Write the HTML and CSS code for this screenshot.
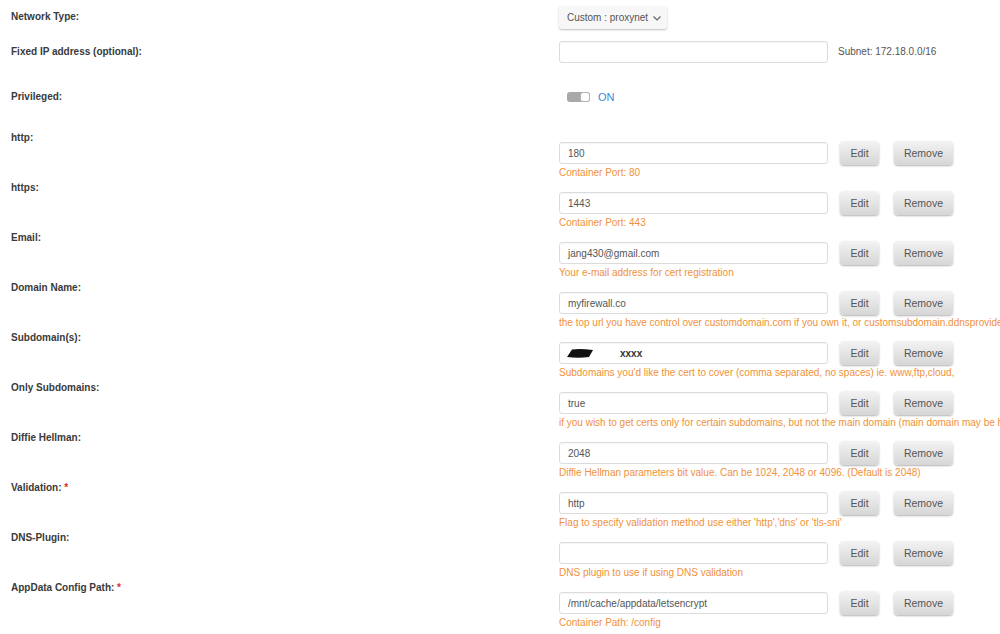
FILE: index.html
```html
<!DOCTYPE html>
<html lang="en">
<head>
  <meta charset="UTF-8">
  <title>Container Settings</title>
  <link rel="stylesheet" href="styles.css">
</head>
<body>
  <div class="form">

    <!-- Network settings -->
    <div class="row row-net">
      <div class="label">Network Type:</div>
      <div class="field">
        <div class="select">
          <span>Custom : proxynet</span>
          <svg class="chevron" width="8" height="5" viewBox="0 0 8 5"><polyline points="0.5,0.5 4,4 7.5,0.5" fill="none" stroke="#666" stroke-width="1.2"/></svg>
        </div>
      </div>
    </div>

    <div class="row row-ip">
      <div class="label">Fixed IP address (optional):</div>
      <div class="field inline">
        <div class="input"></div>
        <span class="subnet">Subnet: 172.18.0.0/16</span>
      </div>
    </div>

    <div class="row row-priv">
      <div class="label">Privileged:</div>
      <div class="field inline">
        <div class="toggle"><span class="knob"></span></div>
        <span class="on">ON</span>
      </div>
    </div>

    <!-- Ports / variables -->
    <div class="row item">
      <div class="label">http:</div>
      <div class="field">
        <div class="line">
          <div class="input">180</div>
          <button class="btn btn-edit">Edit</button>
          <button class="btn btn-remove">Remove</button>
        </div>
        <div class="desc">Container Port: 80</div>
      </div>
    </div>

    <div class="row item">
      <div class="label">https:</div>
      <div class="field">
        <div class="line">
          <div class="input">1443</div>
          <button class="btn btn-edit">Edit</button>
          <button class="btn btn-remove">Remove</button>
        </div>
        <div class="desc">Container Port: 443</div>
      </div>
    </div>

    <div class="row item">
      <div class="label">Email:</div>
      <div class="field">
        <div class="line">
          <div class="input">jang430@gmail.com</div>
          <button class="btn btn-edit">Edit</button>
          <button class="btn btn-remove">Remove</button>
        </div>
        <div class="desc">Your e-mail address for cert registration</div>
      </div>
    </div>

    <div class="row item">
      <div class="label">Domain Name:</div>
      <div class="field">
        <div class="line">
          <div class="input">myfirewall.co</div>
          <button class="btn btn-edit">Edit</button>
          <button class="btn btn-remove">Remove</button>
        </div>
        <div class="desc">the top url you have control over customdomain.com if you own it, or customsubdomain.ddnsprovider.com if dynamic dns</div>
      </div>
    </div>

    <div class="row item">
      <div class="label">Subdomain(s):</div>
      <div class="field">
        <div class="line">
          <div class="input">
            <svg class="redact" width="28" height="11" viewBox="0 0 28 11"><path d="M6 1.5 Q14 0.5 27 2 L23 9 Q12 10.5 1 9 Z" fill="#111"/></svg>
            <b class="masked">xxxx</b>
          </div>
          <button class="btn btn-edit">Edit</button>
          <button class="btn btn-remove">Remove</button>
        </div>
        <div class="desc">Subdomains you'd like the cert to cover (comma separated, no spaces) ie. www,ftp,cloud,</div>
      </div>
    </div>

    <div class="row item">
      <div class="label">Only Subdomains:</div>
      <div class="field">
        <div class="line">
          <div class="input">true</div>
          <button class="btn btn-edit">Edit</button>
          <button class="btn btn-remove">Remove</button>
        </div>
        <div class="desc">if you wish to get certs only for certain subdomains, but not the main domain (main domain may be hosted on another machine and cannot be validated)</div>
      </div>
    </div>

    <div class="row item">
      <div class="label">Diffie Hellman:</div>
      <div class="field">
        <div class="line">
          <div class="input">2048</div>
          <button class="btn btn-edit">Edit</button>
          <button class="btn btn-remove">Remove</button>
        </div>
        <div class="desc">Diffie Hellman parameters bit value. Can be 1024, 2048 or 4096. (Default is 2048)</div>
      </div>
    </div>

    <div class="row item">
      <div class="label">Validation: <span class="req">*</span></div>
      <div class="field">
        <div class="line">
          <div class="input">http</div>
          <button class="btn btn-edit">Edit</button>
          <button class="btn btn-remove">Remove</button>
        </div>
        <div class="desc">Flag to specify validation method use either 'http','dns' or 'tls-sni'</div>
      </div>
    </div>

    <div class="row item">
      <div class="label">DNS-Plugin:</div>
      <div class="field">
        <div class="line">
          <div class="input"></div>
          <button class="btn btn-edit">Edit</button>
          <button class="btn btn-remove">Remove</button>
        </div>
        <div class="desc">DNS plugin to use if using DNS validation</div>
      </div>
    </div>

    <div class="row item">
      <div class="label">AppData Config Path: <span class="req">*</span></div>
      <div class="field">
        <div class="line">
          <div class="input">/mnt/cache/appdata/letsencrypt</div>
          <button class="btn btn-edit">Edit</button>
          <button class="btn btn-remove">Remove</button>
        </div>
        <div class="desc">Container Path: /config</div>
      </div>
    </div>

  </div>
</body>
</html>
```

FILE: styles.css
```css
/* General Styles */
body {
  margin: 0;
  background: #fff;
  font-family: "Liberation Sans", Arial, sans-serif;
  font-size: 10px;
  color: #555;
  overflow: hidden;
}

.form {
  width: 1000px;
  overflow: hidden;
}

.row {
  display: flex;
}

.label {
  width: 548px;
  flex-shrink: 0;
  padding-left: 11px;
  font-weight: bold;
  color: #3a3a3a;
  line-height: 14px;
}

.req {
  color: #e22828;
}

.field {
  display: flex;
  flex-direction: column;
  min-width: 0;
  white-space: nowrap;
}

.field.inline {
  flex-direction: row;
  align-items: center;
}

/* Top rows */
.row-net {
  height: 34px;
  align-items: center;
}

.row-ip {
  height: 35px;
  align-items: center;
}

.row-priv {
  height: 56px;
  align-items: center;
  margin-bottom: 6px;
}

.select {
  display: flex;
  align-items: center;
  width: 108px;
  height: 23px;
  box-sizing: border-box;
  padding: 0 6px 0 8px;
  margin-top: 1px;
  background: #f7f7f7;
  border-radius: 3px;
  box-shadow: 0 1px 2px rgba(0, 0, 0, 0.25);
  color: #555;
  font-size: 10px;
}

.chevron {
  margin-left: auto;
  margin-top: 1px;
}

.subnet {
  margin-left: 10px;
  color: #555;
}

.toggle {
  position: relative;
  width: 23px;
  height: 10px;
  margin-left: 8px;
  background: #a9a9a9;
  border-radius: 3px;
}

.knob {
  position: absolute;
  right: 0;
  top: 0;
  width: 10px;
  height: 10px;
  box-sizing: border-box;
  background: #fff;
  border: 1px solid #b5b5b5;
  border-radius: 3px;
}

.on {
  margin-left: 8px;
  color: #3d8ad8;
  font-size: 11px;
}

/* Port / variable rows */
.item {
  height: 50px;
}

.item .field {
  padding-top: 10px;
}

.line {
  display: flex;
  align-items: center;
  height: 24px;
}

.input {
  display: flex;
  align-items: center;
  width: 269px;
  height: 22px;
  box-sizing: border-box;
  padding-left: 8px;
  background: #fff;
  border: 1px solid #dcdcdc;
  border-radius: 3px;
  box-shadow: inset 0 1px 1px rgba(0, 0, 0, 0.04);
  color: #555;
  font-size: 10px;
}

.redact {
  margin-left: -2px;
}

.masked {
  margin-left: 26px;
  color: #333;
}

.btn {
  height: 24px;
  padding: 0;
  border: none;
  border-radius: 4px;
  background: linear-gradient(#f3f3f3, #d6d6d6);
  box-shadow: 0 1px 2px rgba(0, 0, 0, 0.3);
  font-family: "Liberation Sans", Arial, sans-serif;
  font-size: 10.5px;
  color: #555;
}

.btn-edit {
  width: 39px;
  margin-left: 12px;
}

.btn-remove {
  width: 59px;
  margin-left: 15px;
}

.desc {
  line-height: 12px;
  margin-top: 2px;
  color: #f0913a;
}
```
